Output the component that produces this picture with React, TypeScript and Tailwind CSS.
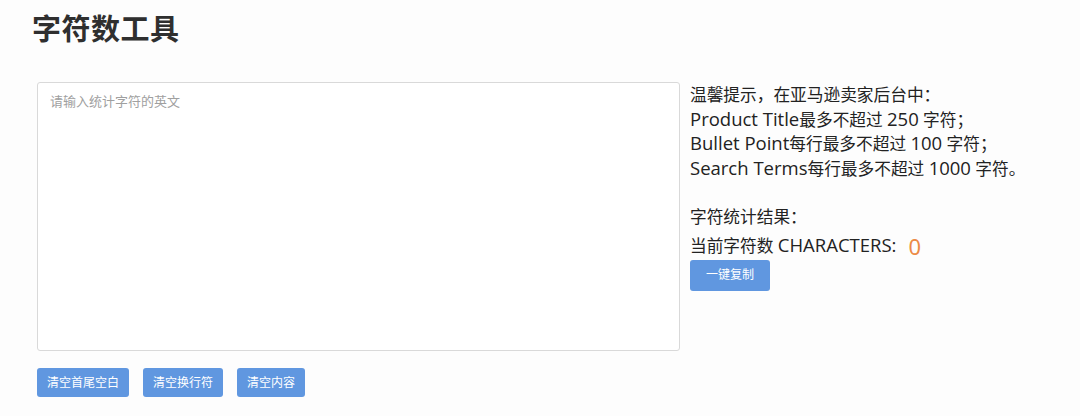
import React from "react";

function L({ children }: { children: React.ReactNode }) {
  return <span className="text-[18.5px] leading-[20px]" style={{ fontFamily: '"Open Sans", "Noto Sans", sans-serif' }}>{children}</span>;
}

export default function App() {
  const font = { fontFamily: '"Noto Sans", "Noto Sans CJK SC", sans-serif' };
  return (
    <div className="w-[1080px] h-[416px] bg-[#fdfdfd] text-[#222] overflow-hidden" style={font}>
      <h1 className="pl-[32px] pt-[10px] text-[29px] leading-[38px] font-bold text-[#2f2f2f] tracking-[0.5px]">字符数工具</h1>
      <div className="flex mt-[34px] pl-[37px]">
        <div className="flex flex-col">
          <textarea
            placeholder="请输入统计字符的英文"
            className="w-[643px] h-[269px] border border-[#d9d9d9] rounded-[3px] bg-white px-[12px] py-[8px] text-[13px] leading-[20px] resize-none outline-none placeholder:text-[#a0a0a0]"
          />
          <div className="flex gap-[14px] mt-[17px]">
            <button className="h-[29px] px-[10px] bg-[#6097e0] text-white text-[12px] rounded-[3px]">清空首尾空白</button>
            <button className="h-[29px] px-[10px] bg-[#6097e0] text-white text-[12px] rounded-[3px]">清空换行符</button>
            <button className="h-[29px] px-[10px] bg-[#6097e0] text-white text-[12px] rounded-[3px]">清空内容</button>
          </div>
        </div>
        <div className="ml-[10px] pt-[1px] text-[16.7px] leading-[24.5px] text-[#222]">
          <p className="h-[24.5px]">温馨提示，在亚马逊卖家后台中：</p>
          <p className="h-[24.5px]"><L>Product Title</L>最多不超过 <L>250</L> 字符；</p>
          <p className="h-[24.5px]"><L>Bullet Point</L>每行最多不超过 <L>100</L> 字符；</p>
          <p className="h-[24.5px]"><L>Search Terms</L>每行最多不超过 <L>1000</L> 字符。</p>
          <p className="mt-[24px] h-[24.5px]">字符统计结果：</p>
          <p className="mt-[3px] flex items-end h-[26px]">
            <span>当前字符数&nbsp;<L>CHARACTERS:</L></span>
            <span className="ml-[12px] text-[22px] leading-[26px] text-[#ec8a45]">0</span>
          </p>
          <button className="mt-[1px] h-[31px] w-[80px] bg-[#6097e0] text-white text-[12px] rounded-[3px]">一键复制</button>
        </div>
      </div>
    </div>
  );
}
